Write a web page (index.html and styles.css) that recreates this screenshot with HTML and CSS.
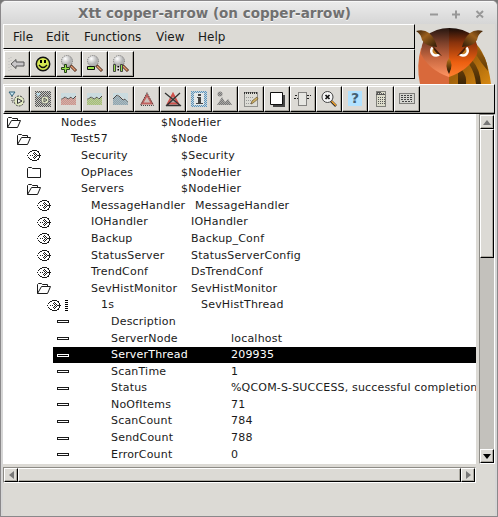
FILE: index.html
```html
<!DOCTYPE html>
<html lang="en">
<head>
<meta charset="utf-8">
<title>Xtt copper-arrow</title>
<link rel="stylesheet" href="styles.css">
</head>
<body>
<svg class="defs" width="0" height="0">
  <defs>
    <pattern id="dim" width="2" height="2" patternUnits="userSpaceOnUse"><path fill="#dcdad5" d="M0 0h1v1H0zM1 1h1v1H1z"/></pattern>
    <pattern id="check" width="2" height="2" patternUnits="userSpaceOnUse"><path fill="#555" d="M0 0h1v1H0zM1 1h1v1H1z"/></pattern>
    <pattern id="bluecheck" width="2" height="2" patternUnits="userSpaceOnUse"><path fill="#5b92ba" d="M0 0h1v1H0zM1 1h1v1H1z"/></pattern>
    <radialGradient id="ball" cx=".35" cy=".3"><stop offset="0" stop-color="#fff"/><stop offset="1" stop-color="#b5b5b5"/></radialGradient>
    <linearGradient id="faceL" x1="0" y1="0" x2="0" y2="1"><stop offset="0" stop-color="#261610"/><stop offset=".3" stop-color="#7c402a"/><stop offset=".6" stop-color="#c4653f"/><stop offset="1" stop-color="#ff9462"/></linearGradient>
    <linearGradient id="faceR" x1="0" y1="0" x2="0" y2="1"><stop offset="0" stop-color="#170c08"/><stop offset=".3" stop-color="#8a330c"/><stop offset=".7" stop-color="#ec5f10"/><stop offset="1" stop-color="#ff8030"/></linearGradient>
    <linearGradient id="horn" x1="0" y1="0" x2="1" y2="1"><stop offset="0" stop-color="#3b2006"/><stop offset=".4" stop-color="#9a5f1c"/><stop offset="1" stop-color="#2e1a08"/></linearGradient>
    <linearGradient id="hornR" x1="1" y1="0" x2="0" y2="1"><stop offset="0" stop-color="#3b2006"/><stop offset=".4" stop-color="#9a5f1c"/><stop offset="1" stop-color="#2e1a08"/></linearGradient>
    <linearGradient id="wing" x1="0" y1="0" x2="1" y2="1"><stop offset="0" stop-color="#b66b08"/><stop offset=".5" stop-color="#a2620b"/><stop offset="1" stop-color="#d88912"/></linearGradient>
    <linearGradient id="feather" x1="0" y1="0" x2="0" y2="1"><stop offset="0" stop-color="#9a5e0c"/><stop offset="1" stop-color="#3e2606"/></linearGradient>
    <linearGradient id="beak" x1="0" y1="0" x2="0" y2="1"><stop offset="0" stop-color="#c77a18"/><stop offset="1" stop-color="#160b02"/></linearGradient>
    <symbol id="open" viewBox="0 0 14 11"><path d="M.5 10.500V1.500L1.500.5H4.500L5.500 1.500H10.500V3.500M.5 10.500L4.500 3.500H13.500L10.500 10.500Z" fill="none" stroke="currentColor"/></symbol>
    <symbol id="closed" viewBox="0 0 14 11"><path d="M.5 10.500V1.500L1.500.5H4.500L5.500 1.500H13.500V10.500Z" fill="none" stroke="currentColor"/></symbol>
    <symbol id="leaf" viewBox="0 0 14 11"><path d="M5 .5h5M3 1.500h2M10 1.500h2M2 2.500h1M7 2.500h1M11 2.500h1M1 3.500h1M6 3.500h1M8 3.500h1M12 3.500h1M7 4.500h1M9 4.500h1M12 4.500h1M0 5.500h1M3 5.500h1M5 5.500h1M8 5.500h1M10 5.500h4M7 6.500h1M9 6.500h1M12 6.500h1M1 7.500h1M6 7.500h1M8 7.500h1M12 7.500h1M2 8.500h1M7 8.500h1M11 8.500h1M3 9.500h2M10 9.500h2M5 10.500h5" fill="none" stroke="currentColor"/></symbol>
    <symbol id="attr" viewBox="0 0 12 3"><path d="M0 0H12V3H0ZM1 1V2H11V1Z" fill="currentColor" fill-rule="evenodd"/></symbol>
    <symbol id="lens" viewBox="0 0 18 18"><path d="M10 10L16 16" stroke="#482718" stroke-width="3"/><path d="M11 11L15.500 15.500" stroke="#e49a72" stroke-width="1.500"/><circle cx="7" cy="6" r="5.500" fill="url(#ball)" stroke="#777" stroke-dasharray="1 1"/></symbol>
  </defs>
</svg>
<div class="window">
  <header class="title"><h1>Xtt copper-arrow (on copper-arrow)</h1>
    <svg class="controls" width="56" height="10"><path d="M1 5.500H9M23 5.500H31M27 1.500V9.500M47.500 2L54 8.500M54 2L47.500 8.500" fill="none" stroke="#989898" stroke-width="2"/></svg>
  </header>
  <div class="top">
    <div class="bars">
      <nav class="menu"><span class="m-file">File</span><span class="m-edit">Edit</span><span class="m-func">Functions</span><span class="m-view">View</span><span>Help</span></nav>
      <div class="tools first">
        <button><svg viewBox="0 0 18 18"><path d="M3 9L8 4.500V7H16V11H8V13.500Z" fill="#c9c7c9" stroke="#555"/><path d="M1 3V16M3 2V7M3 11V16" stroke="#bbb" stroke-dasharray="1 2"/></svg></button>
        <button><svg viewBox="0 0 18 18"><circle cx="9" cy="9" r="6.700" fill="#d5e751" stroke="#111" stroke-width="1.500"/><path d="M6 5h2v3H6zM10 5h2v3h-2z"/><path d="M5 10Q9 15 13 10" fill="none" stroke="#111" stroke-width="1.300"/></svg></button>
        <button><svg viewBox="0 0 18 18"><use href="#lens" width="18" height="18"/><path d="M4.500 9.500H6.500V12.500H9.500V14.500H6.500V17.500H4.500V14.500H1.500V12.500H4.500Z" fill="#9ae34c" stroke="#25401a"/></svg></button>
        <button><svg viewBox="0 0 18 18"><use href="#lens" width="18" height="18"/><path d="M1.500 11.500H8.500V14.500H1.500Z" fill="#9ae34c" stroke="#111"/></svg></button>
        <button><svg viewBox="0 0 18 18"><use href="#lens" width="18" height="18"/><path d="M1.500 9.500H3.500V16.500H1.500ZM8.500 9.500H10.500V16.500H8.500Z" fill="#9ae34c" stroke="#444"/><path d="M5.500 11h1.500v1.500H5.500zM5.500 14h1.500v1.500H5.500z"/></svg></button>
      </div>
    </div>
    <svg class="owl" width="77" height="56" viewBox="0 0 77 56">
      <path d="M57 13Q71 24 75 56H32V30Z" fill="url(#wing)"/>
      <path d="M61 20Q71 28 72 43Q65 35 59 25ZM56 32Q64 41 65 56H60Q59 45 53 36ZM46 42Q51 48 50 56H42V45Z" fill="url(#feather)"/>
      <path d="M5 20Q0 38 4 56H33V36Z" fill="#d9693b"/>
      <path d="M10 8Q20 0 33 0V49Q13 42 5 26Q5 16 10 8Z" fill="url(#faceL)"/>
      <path d="M33 0Q48 0 57 8Q63 17 61 26Q53 42 33 49Z" fill="url(#faceR)"/>
      <path d="M16.500 19.500A4.300 4.300 0 1 0 23.500 26" fill="#c07c24" stroke="#fff" stroke-width="2.500"/>
      <path d="M50.500 19.500A4.300 4.300 0 1 1 43.500 26" fill="#c07c24" stroke="#fff" stroke-width="2.500"/>
      <path d="M17 18L26 28L21 25.500L18 22Z" fill="#3c1a06"/>
      <path d="M50 18L41 28L46 25.500L49 22Z" fill="#4c1d06"/>
      <path d="M0 3Q8 1 13 5Q19 10 21 19Q9 18 6 12Q5 6 0 3Z" fill="url(#horn)"/>
      <path d="M67 3Q59 1 54 5Q48 10 46 19Q58 18 61 12Q62 6 67 3Z" fill="url(#hornR)"/>
      <path d="M33 30Q38 36 33 46Q28 37 33 30Z" fill="url(#beak)"/>
    </svg>
  </div>
  <div class="tools second">
    <button><svg viewBox="0 0 18 18"><path d="M1 2H7L4 6Z" fill="#cde7f1" stroke="#32637b"/><path d="M4 6V12H7" fill="none" stroke="#444" stroke-dasharray="1 1"/><circle cx="11" cy="11" r="5" fill="#e1e8c2" stroke="#444" stroke-dasharray="2 1"/><path d="M9.500 8.500L14 11L9.500 13.500Z" fill="#eee" stroke="#333"/></svg></button>
    <button><svg viewBox="0 0 18 18"><path d="M1 1H17V17H1Z" fill="#c9c9c5"/><path d="M1 1H17V17H1Z" fill="url(#check)"/><path d="M2 3H7L4 7Z" fill="#bddce8"/><circle cx="11" cy="10" r="4" fill="#dfe4c4" stroke="#777"/><path d="M10 8L13 10L10 12Z" stroke="#555" fill="none"/></svg></button>
    <button><svg viewBox="0 0 18 18"><path d="M1 3H16V8H1Z" fill="#c6dce2"/><path d="M1 10L5 7L8 9L11 7L13 9L16 6V15H1Z" fill="#cc948c"/><path d="M1 9.500L5 7L8 9L11 7L13 9L16 6" fill="none" stroke="#444"/><path fill="url(#dim)" opacity=".4" d="M0 2H17V16H0z"/></svg></button>
    <button><svg viewBox="0 0 18 18"><path d="M1 3H16V8H1Z" fill="#c6dce2"/><path d="M1 10L5 7L8 9L11 7L13 9L16 6V15H1Z" fill="#a5bf78"/><path d="M1 9.500L5 7L8 9L11 7L13 9L16 6" fill="none" stroke="#444"/><path fill="url(#dim)" opacity=".4" d="M0 2H17V16H0z"/></svg></button>
    <button><svg viewBox="0 0 18 18"><path d="M1 3H16V12L7 5L1 9Z" fill="#c6dce2"/><path d="M1 9L5 5L8 7L11 10L13 9L16 12V15H1Z" fill="#8da5b0"/><path d="M1 9L5 5L8 7L11 10L13 9L16 12" fill="none" stroke="#444"/><path fill="url(#dim)" opacity=".4" d="M0 2H17V16H0z"/></svg></button>
    <button><svg viewBox="0 0 18 18"><path d="M9 5L14 13.500H4Z" fill="#cfc0bb" stroke="#c0615e" stroke-width="2"/><path d="M9 2.500L15.500 15.500H2.500Z" fill="none" stroke="#444" stroke-dasharray="1 1"/></svg></button>
    <button><svg viewBox="0 0 18 18"><path d="M9 4L14 13.500H4Z" fill="#aaa" stroke="#d0504b" stroke-width="2"/><path d="M1 3L17 16M16 3L2 16M2 15.500H16" stroke="#333" stroke-width="1.300"/></svg></button>
    <button><svg viewBox="0 0 18 18"><path d="M1 1H17V17H1Z" fill="#c6d6df"/><path d="M1 1H17V17H1Z" fill="url(#bluecheck)"/><path d="M4 3H14V15H4Z" fill="#e4e8e8"/><path d="M8 4h3v2H8zM7 7h4v6h2v1H6v-1h2V8H7z" fill="#444"/></svg></button>
    <button><svg viewBox="0 0 18 18"><circle cx="4" cy="4" r="2.500" fill="#777"/><path d="M1 15L6 7L9 12L12 9L16 15Z" fill="#777"/><path fill="url(#dim)" opacity=".5" d="M0 0H18V18H0z"/></svg></button>
    <button><svg viewBox="0 0 18 18"><path d="M2.500 2.500H15.500V16.500H2.500Z" fill="#dcdcd6" stroke="#444" stroke-dasharray="1 1"/><path d="M2 3H16" stroke="#333" stroke-width="2" stroke-dasharray="1 1"/><path d="M4 7.500H11M4 10.500H9M4 13.500H9" stroke="#999" stroke-dasharray="1 1"/><path d="M9 14L10 11L15 7L16 9L11 13Z" fill="#d1b466" stroke="#655232" stroke-width=".7"/></svg></button>
    <button><svg viewBox="0 0 18 18"><path d="M5 5H17V17H5Z" fill="#444"/><path d="M2.500 2.500H14.500V14.500H2.500Z" fill="#fff" stroke="#111"/></svg></button>
    <button><svg viewBox="0 0 18 18"><path d="M4.500 2.500H12.500V15.500H4.500Z" fill="#e6e6e2" stroke="#222" stroke-dasharray="1 1"/><path d="M1 5.500H4M0 8.500H4M13 5.500H17M13 8.500H16" stroke="#222" stroke-dasharray="2 1"/></svg></button>
    <button><svg viewBox="0 0 18 18"><path d="M11 11L16 16" stroke="#222" stroke-width="2.500"/><path d="M11.500 11L16 15.500" stroke="#f1a330" stroke-width="1.500"/><circle cx="7.500" cy="7" r="5.500" fill="#f4f4f4" stroke="#444"/><path d="M5.500 5L9.500 9M9.500 5L5.500 9" stroke="#111" stroke-width="1.700"/></svg></button>
    <button class="question"><b>?</b></button>
    <button><svg viewBox="0 0 18 18"><path d="M4.500 1.500H13.500V16.500H4.500Z" fill="#dcdccb" stroke="#222" stroke-dasharray="1 1"/><path d="M5 3.500H13M6 7.500H13M6 9.500H13M6 11.500H13M6 13.500H13" stroke="#555" stroke-dasharray="1 1"/><path d="M5 2.500H9M4 4.500H13" stroke="#555"/></svg></button>
    <button><svg viewBox="0 0 18 18"><path d="M1.500 3.500H16.500V13.500H1.500Z" fill="#d5d5d0" stroke="#222" stroke-dasharray="1 1"/><path d="M3 5.500H15M3 7.500H15M3 9.500H15M4 11.500H14" stroke="#444" stroke-dasharray="2 1"/></svg></button>
  </div>
  <div class="middle">
    <main class="tree">
      <div class="row l0"><svg class="icon"><use href="#open"/></svg><span class="name">Nodes</span><span>$NodeHier</span></div>
      <div class="row l1"><svg class="icon"><use href="#open"/></svg><span class="name">Test57</span><span>$Node</span></div>
      <div class="row l2"><svg class="icon"><use href="#leaf"/></svg><span class="name">Security</span><span>$Security</span></div>
      <div class="row l2"><svg class="icon"><use href="#closed"/></svg><span class="name">OpPlaces</span><span>$NodeHier</span></div>
      <div class="row l2"><svg class="icon"><use href="#open"/></svg><span class="name">Servers</span><span>$NodeHier</span></div>
      <div class="row l3"><svg class="icon"><use href="#leaf"/></svg><span class="name wide">MessageHandler</span><span>MessageHandler</span></div>
      <div class="row l3"><svg class="icon"><use href="#leaf"/></svg><span class="name">IOHandler</span><span>IOHandler</span></div>
      <div class="row l3"><svg class="icon"><use href="#leaf"/></svg><span class="name">Backup</span><span>Backup_Conf</span></div>
      <div class="row l3"><svg class="icon"><use href="#leaf"/></svg><span class="name">StatusServer</span><span>StatusServerConfig</span></div>
      <div class="row l3"><svg class="icon"><use href="#leaf"/></svg><span class="name">TrendConf</span><span>DsTrendConf</span></div>
      <div class="row l3"><svg class="icon"><use href="#open"/></svg><span class="name">SevHistMonitor</span><span>SevHistMonitor</span></div>
      <div class="row l4"><svg class="icon"><use href="#leaf"/></svg><i class="ticks"></i><span class="name">1s</span><span>SevHistThread</span></div>
      <div class="row l5"><svg class="attr"><use href="#attr"/></svg><span class="name">Description</span></div>
      <div class="row l5"><svg class="attr"><use href="#attr"/></svg><span class="name">ServerNode</span><span>localhost</span></div>
      <div class="row l5 selected"><svg class="attr"><use href="#attr"/></svg><span class="name">ServerThread</span><span>209935</span></div>
      <div class="row l5"><svg class="attr"><use href="#attr"/></svg><span class="name">ScanTime</span><span>1</span></div>
      <div class="row l5"><svg class="attr"><use href="#attr"/></svg><span class="name">Status</span><span class="message">%QCOM-S-SUCCESS, successful completion</span></div>
      <div class="row l5"><svg class="attr"><use href="#attr"/></svg><span class="name">NoOfItems</span><span>71</span></div>
      <div class="row l5"><svg class="attr"><use href="#attr"/></svg><span class="name">ScanCount</span><span>784</span></div>
      <div class="row l5"><svg class="attr"><use href="#attr"/></svg><span class="name">SendCount</span><span>788</span></div>
      <div class="row l5"><svg class="attr"><use href="#attr"/></svg><span class="name">ErrorCount</span><span>0</span></div>
    </main>
    <div class="scroll vertical">
      <div class="cap"><svg width="8" height="5"><path d="M0 5L4 0L8 5Z" fill="#777"/></svg></div><div class="thumb"></div><div class="space"></div><div class="cap"><svg width="8" height="5"><path d="M0 0H8L4 5Z"/></svg></div>
    </div>
  </div>
  <div class="scroll horizontal">
    <div class="cap"><svg width="5" height="8"><path d="M5 0V8L0 4Z" fill="#777"/></svg></div><div class="thumb"></div><div class="cap"><svg width="5" height="8"><path d="M0 0L5 4L0 8Z" fill="#777"/></svg></div>
  </div>
</div>
</body>
</html>
```
FILE: styles.css
```css
* { box-sizing: border-box; }
body { margin: 0; background: #777; font-family: "DejaVu Sans", sans-serif; color: #1a1a1a; overflow: hidden; }
.defs { position: absolute; }
.window { width: 498px; height: 517px; background: #dcdad5; border: 1px solid #8a888a; border-radius: 6px 6px 0 0; padding: 0 2px; box-shadow: inset 2px 0 #d6d6d6, inset -2px 0 #d6d6d6; overflow: hidden; }
.title { height: 23px; margin: 0 -2px; display: flex; align-items: center; justify-content: center; background: linear-gradient(#ebebeb, #d6d6d6); border-top: 1px solid #f8f8f8; padding-left: 76px; }
.title h1 { margin: 0; flex: 1; padding-left: 1px; font: bold 13.500px/20px "DejaVu Sans", sans-serif; color: #707070; text-shadow: 0 1px #f5f5f5; white-space: nowrap; }
.controls { margin: 2px 12px 0 0; }
.top { display: flex; height: 60px; }
.bars { width: 412px; }
.menu { height: 25px; display: flex; align-items: center; padding-left: 9px; font-size: 12px; border: 1px solid #000; border-top-color: #fff; border-left-color: #fff; white-space: nowrap; }
.menu span { width: 42px; }
.menu .m-file { width: 33px; }
.menu .m-edit { width: 38px; }
.menu .m-func { width: 72px; }
.tools { display: flex; border: 1px solid #000; border-top-color: #fff; border-left-color: #fff; }
.first { height: 30px; padding-top: 1px; }
.second { height: 30px; width: 492px; padding-top: 1px; box-shadow: inset 0 -1px #9d9b95; }
.owl { margin: 4px 0 0 1px; }
.tools button { width: 26px; height: 26px; padding: 3px; border: 1px solid #fff; border-right-color: #000; border-bottom-color: #000; background: #dcdad5; box-shadow: inset -1px -1px #aaa79f; }
.tools button svg { display: block; width: 18px; height: 18px; }
.tools .question { padding: 0 0 1px; }
.question b { display: block; width: 14px; height: 15px; margin: auto; font: bold 14px/15px "DejaVu Sans", sans-serif; color: #456073; background: #b2e2ff; }
.middle { display: flex; height: 350px; justify-content: space-between; }
.tree { width: 473px; height: 350px; padding-top: .5px; background: #fff; overflow: hidden; font-size: 11px; letter-spacing: .2px; }
.row { height: 16.600px; display: flex; align-items: center; white-space: nowrap; line-height: 16px; }
.l0 { padding-left: 4px; }
.l1 { padding-left: 14px; }
.l2 { padding-left: 24px; }
.l3 { padding-left: 34px; }
.l4 { padding-left: 44px; }
.l5 { margin-left: 50px; padding-left: 4px; }
.icon { width: 14px; height: 11px; flex: none; margin-right: 40px; }
.l4 .icon { margin-right: 4px; }
.ticks { width: 3px; height: 11px; margin-right: 33px; background: repeating-linear-gradient(#000 0 1px, #fff 1px 2px); }
.attr { width: 12px; height: 3px; flex: none; margin-right: 42px; }
.name { width: 100px; flex: none; }
.name.wide { width: 104px; }
.l5 .name { width: 120px; }
.message { letter-spacing: .17px; }
.selected { background: #000; color: #fff; }
.scroll { display: flex; background: #c3c1bc; border: 1px solid #8d8b86; border-right-color: #fff; border-bottom-color: #fff; }
.vertical { flex-direction: column; width: 16px; height: 350px; }
.horizontal { width: 473px; height: 16px; margin-top: 3px; }
.cap, .thumb { background: #dcdad5; border: 1px solid #fff; border-right-color: #000; border-bottom-color: #000; box-shadow: inset -1px -1px #aaa79f; }
.cap { display: flex; flex: none; width: 14px; height: 14px; align-items: center; justify-content: center; }
.vertical .thumb { height: 129px; }
.space { flex: 1; }
.horizontal .thumb { flex: 1; }
```
